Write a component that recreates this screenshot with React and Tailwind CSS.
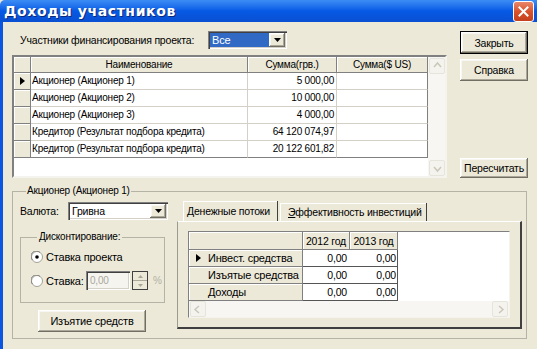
import React from 'react';

// --- XP-style building blocks ---

const RAISED =
  'bg-[#ece9d8] shadow-[inset_-1px_-1px_0_#716f64,inset_1px_1px_0_#ffffff,inset_-2px_-2px_0_#aca899,inset_2px_2px_0_#f7f6f1]';
const SUNKEN =
  'shadow-[inset_1px_1px_0_#808080,inset_2px_2px_0_#404040,inset_-1px_-1px_0_#ffffff,inset_-2px_-2px_0_#d4d0c8]';

const Btn = ({ children, className = '' }) => (
  <div className={`flex items-center justify-center ${RAISED} ${className}`}>{children}</div>
);

const DownArrow = ({ color = '#000' }) => (
  <svg width="7" height="4" viewBox="0 0 7 4">
    <polygon points="0,0 7,0 3.5,4" fill={color} />
  </svg>
);

const Combo = ({ value, selected, className = '' }) => (
  <div className={`flex bg-white p-[2px] ${SUNKEN} ${className}`}>
    <div className={`flex flex-1 items-center pl-[2px] ${selected ? 'bg-[#316ac5] text-white' : ''}`}>{value}</div>
    <div className={`flex w-[16px] items-center justify-center ${RAISED}`}>
      <DownArrow />
    </div>
  </div>
);

const Pointer = () => (
  <svg width="5" height="8" viewBox="0 0 5 8">
    <polygon points="0,0 5,4 0,8" fill="#000" />
  </svg>
);

const Radio = ({ checked }) => (
  <svg width="12" height="12" viewBox="0 0 12 12">
    <circle cx="6" cy="6" r="5.5" fill="#ffffff" stroke="#a4a297" />
    <path d="M1.5 9 A5 5 0 0 1 9 1.5" fill="none" stroke="#808080" />
    {checked && <circle cx="6" cy="6" r="1.8" fill="#000" />}
  </svg>
);

const ScrollBtn = ({ dir }) => {
  const pts = {
    up: '3,7 6.5,3 10,7',
    down: '3,5 6.5,9 10,5',
    left: '7,3 3,6.5 7,10',
    right: '5,3 9,6.5 5,10',
  }[dir];
  return (
    <div className="flex h-[16px] w-[16px] items-center justify-center rounded-[2px] border border-[#e6e5dc] bg-[#f4f3ee]">
      <svg width="13" height="13" viewBox="0 0 13 13">
        <polyline points={pts} fill="none" stroke="#cac8bb" strokeWidth="1.5" />
      </svg>
    </div>
  );
};

// --- data ---

const members = [
  { name: 'Акционер (Акционер 1)', uah: '5 000,00' },
  { name: 'Акционер (Акционер 2)', uah: '10 000,00' },
  { name: 'Акционер (Акционер 3)', uah: '4 000,00' },
  { name: 'Кредитор (Результат подбора кредита)', uah: '64 120 074,97' },
  { name: 'Кредитор (Результат подбора кредита)', uah: '20 122 601,82' },
];

const flows = ['Инвест. средства', 'Изъятые средства', 'Доходы'];

const HEAD = 'flex items-center bg-[#ece9d8] border-r border-b border-[#808080] shadow-[inset_1px_1px_0_#ffffff]';

export default function App() {
  return (
    <div className="flex h-[349px] w-[537px] flex-col overflow-hidden whitespace-nowrap bg-[#ece9d8] font-['Liberation_Sans',Arial,sans-serif] text-[10px] leading-[12px] tracking-[-0.2px] text-black">
      {/* title bar */}
      <div className="flex h-[22px] shrink-0 items-center rounded-tl-[5px] bg-linear-to-b from-[#3d8df5] via-[#0659e4] to-[#0a50d2] pl-[4px] pr-[3px]">
        <span className="font-['DejaVu_Sans',sans-serif] text-[14px] font-bold tracking-[0.6px] text-white [text-shadow:1px_1px_0_#0a2a7a]">
          Доходы участников
        </span>
        <div className="ml-auto flex h-[21px] w-[21px] items-center justify-center rounded-[3px] border border-white bg-linear-to-b from-[#e8876a] via-[#d9532c] to-[#c4401c]">
          <svg width="11" height="11" viewBox="0 0 11 11">
            <path d="M1.5 1.5 L9.5 9.5 M9.5 1.5 L1.5 9.5" stroke="#fff" strokeWidth="2" strokeLinecap="square" />
          </svg>
        </div>
      </div>

      {/* body */}
      <div className="flex flex-1 flex-col border-l-[3px] border-[#0b55e0] pl-[9px] pt-[9px]">
        <div className="flex">
          <div className="w-[435px]">
            <div className="flex h-[18px] items-center">
              <span className="ml-[8px] w-[188px] text-[10.5px]">Участники финансирования проекта:</span>
              <Combo value="Все" selected className="h-[18px] w-[79px] text-[11px]" />
            </div>

            {/* members grid */}
            <div className="mt-[6px] flex h-[123px] border-2 border-t-[#808080] border-l-[#808080] border-r-[#f4f3ee] border-b-[#f4f3ee] bg-white">
              <div className="w-[414px]">
                <div className="flex h-[16px]">
                  <div className={`${HEAD} w-[17px]`} />
                  <div className={`${HEAD} w-[217px] justify-center`}>Наименование</div>
                  <div className={`${HEAD} w-[89px] justify-center`}>Сумма(грв.)</div>
                  <div className={`${HEAD} w-[91px] justify-center`}>Сумма($ US)</div>
                </div>
                {members.map((m, i) => (
                  <div key={i} className="flex h-[17px]">
                    <div className={`${HEAD} w-[17px] justify-center`}>{i === 0 && <Pointer />}</div>
                    <div className={`flex w-[217px] items-center border-r border-b border-[#d4d0c8] pl-[1px] ${i === 4 ? 'border-b-[#808080]' : ''}`}>
                      {m.name}
                    </div>
                    <div className={`flex w-[89px] items-center justify-end border-r border-b border-[#d4d0c8] pr-[2px] ${i === 4 ? 'border-b-[#808080]' : ''}`}>
                      {m.uah}
                    </div>
                    <div className={`w-[91px] border-r border-b border-[#d4d0c8] border-r-[#808080] ${i === 4 ? 'border-b-[#808080]' : ''}`} />
                  </div>
                ))}
              </div>
              <div className="flex w-[17px] flex-col items-end justify-between bg-[#f7f6f2] pt-[1px]">
                <ScrollBtn dir="up" />
                <ScrollBtn dir="down" />
              </div>
            </div>
          </div>

          {/* right buttons */}
          <div className="ml-[13px] flex w-[68px] flex-col text-[10.5px]">
            <div className="border border-black">
              <Btn className="h-[21px]">Закрыть</Btn>
            </div>
            <Btn className="mt-[5px] h-[22px]">Справка</Btn>
            <Btn className="mt-[77px] h-[20px]">Пересчитать</Btn>
          </div>
        </div>

        {/* lower group */}
        <fieldset className="mt-[7px] h-[154px] w-[515px] border border-[#b5b3a6] pb-0 pl-[7px] pt-[5px]">
          <legend className="ml-[6px] px-[1px]">Акционер (Акционер 1)</legend>
          <div className="flex">
            <div className="w-[148px]">
              <div className="flex h-[18px] items-center">
                <span className="w-[48px] text-[10.5px]">Валюта:</span>
                <Combo value="Гривна" className="h-[18px] w-[100px] text-[10.5px]" />
              </div>

              <fieldset className="mt-[11px] h-[72px] w-[145px] border border-[#b5b3a6] pl-[10px] pt-[5px]">
                <legend className="ml-[6px] px-[2px]">Дисконтирование:</legend>
                <div className="flex h-[18px] items-center">
                  <Radio checked />
                  <span className="ml-[3px] text-[11px]">Ставка проекта</span>
                </div>
                <div className="mt-[5px] flex h-[19px] items-center">
                  <Radio />
                  <span className="ml-[3px] w-[37px] text-[11px]">Ставка:</span>
                  <div className={`ml-[3px] flex h-[19px] w-[44px] items-center bg-[#f5f4ef] pl-[4px] text-[#a9a89f] ${SUNKEN}`}>0,00</div>
                  <div className="ml-[2px] flex h-[19px] w-[16px] flex-col border border-[#404040] bg-[#ece9d8]">
                    <div className="flex flex-1 items-center justify-center border-b border-[#aca899]">
                      <svg width="5" height="3" viewBox="0 0 5 3"><polygon points="0,3 5,3 2.5,0" fill="#aca899" /></svg>
                    </div>
                    <div className="flex flex-1 items-center justify-center">
                      <svg width="5" height="3" viewBox="0 0 5 3"><polygon points="0,0 5,0 2.5,3" fill="#aca899" /></svg>
                    </div>
                  </div>
                  <span className="ml-[5px] text-[#b3b1a6]">%</span>
                </div>
              </fieldset>

              <Btn className="ml-[18px] mt-[7px] h-[22px] w-[108px] text-[11px]">Изъятие средств</Btn>
            </div>

            {/* tabs */}
            <div className="-mt-[1px] ml-[9px] w-[345px]">
              <div className="flex h-[20px] items-end pl-[6px] text-[10.5px]">
                <div className="flex h-[20px] w-[95px] items-center border-r border-[#404040] pl-[4px] shadow-[inset_1px_1px_0_#ffffff]">
                  Денежные потоки
                </div>
                <div className="ml-[2px] flex h-[18px] w-[147px] items-center border-r border-[#404040] pl-[8px] shadow-[inset_1px_1px_0_#ffffff]">
                  <span className="underline">Э</span>ффективность инвестиций
                </div>
              </div>
              <div className="h-[108px] border-l border-t border-l-[#9d9b90] border-t-[#ffffff] border-r-2 border-b-2 border-r-[#404040] border-b-[#404040] pl-[10px] pt-[9px]">
                <div className="flex h-[87px] w-[322px] flex-col border border-t-[#808080] border-l-[#808080] border-r-[#f4f3ee] border-b-[#f4f3ee] bg-white text-[10.5px]">
                  <div className="flex h-[18px]">
                    <div className={`w-[114px] ${HEAD} border-[#555]`} />
                    <div className={`w-[47px] justify-center ${HEAD} border-[#555]`}>2012 год</div>
                    <div className={`w-[48px] justify-center ${HEAD} border-[#555]`}>2013 год</div>
                  </div>
                  {flows.map((f, i) => (
                    <div key={f} className="flex h-[17px]">
                      <div className={`w-[114px] ${HEAD} border-[#555] text-[11px]`}>
                        <div className="flex w-[19px] justify-center">{i === 0 && <Pointer />}</div>
                        {f}
                      </div>
                      <div className="flex w-[47px] items-center justify-end border-b border-[#555] pr-[3px]">0,00</div>
                      <div className="flex w-[48px] items-center justify-end border-b border-r border-[#555] pr-[1px]">0,00</div>
                    </div>
                  ))}
                  <div className="mt-auto flex h-[16px] items-center justify-between bg-[#f7f6f2] px-[1px]">
                    <ScrollBtn dir="left" />
                    <ScrollBtn dir="right" />
                  </div>
                </div>
              </div>
            </div>
          </div>
        </fieldset>
      </div>
    </div>
  );
}
